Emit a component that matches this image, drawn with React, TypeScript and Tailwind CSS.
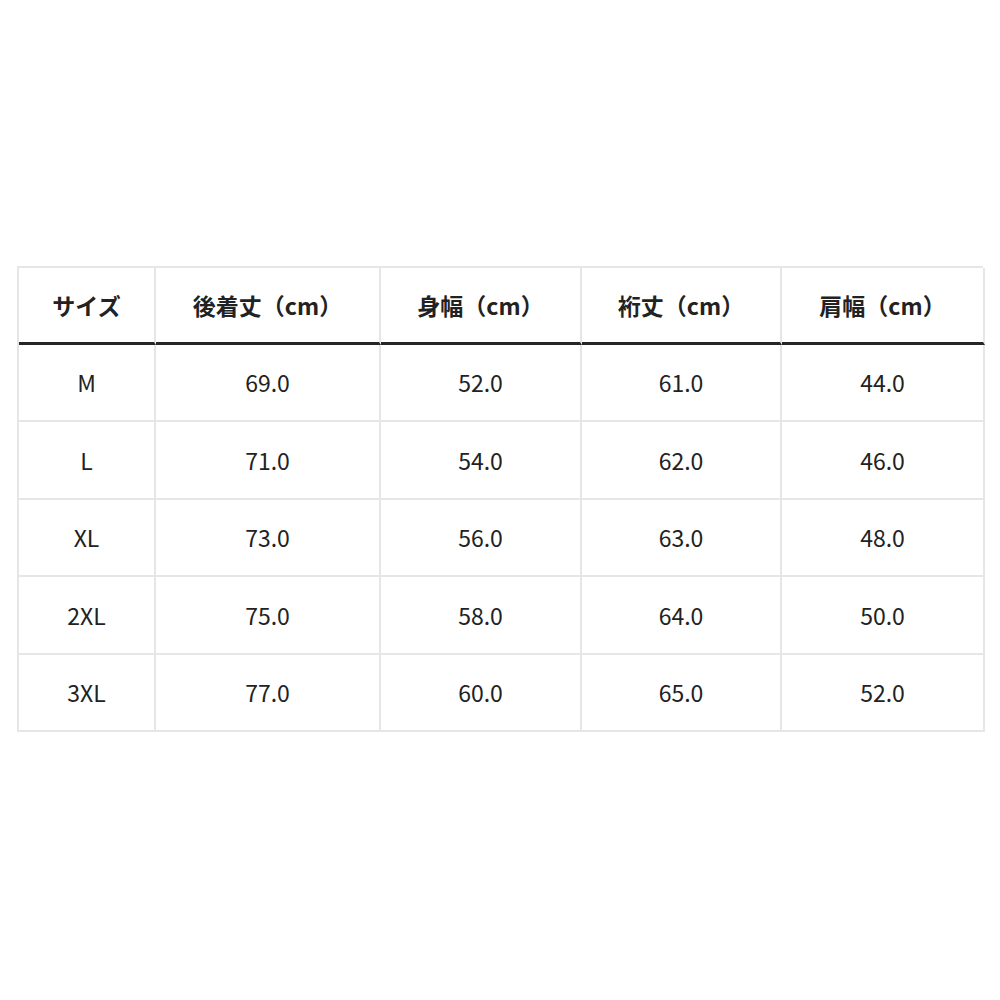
import React from "react";

const headers = ["サイズ", "後着丈（cm）", "身幅（cm）", "裄丈（cm）", "肩幅（cm）"];
const rows = [
  ["M", "69.0", "52.0", "61.0", "44.0"],
  ["L", "71.0", "54.0", "62.0", "46.0"],
  ["XL", "73.0", "56.0", "63.0", "48.0"],
  ["2XL", "75.0", "58.0", "64.0", "50.0"],
  ["3XL", "77.0", "60.0", "65.0", "52.0"],
];

export default function App() {
  return (
    <div
      className="w-[1000px] h-[1000px] bg-white pt-[266px] pl-[17px]"
      style={{ fontFamily: '"Noto Sans CJK JP", "Noto Sans", sans-serif' }}
    >
      <div className="grid w-[966px] grid-cols-[137px_225px_201px_200px_203px] border-l-2 border-t-2 border-[#e6e6e6]">
        {headers.map((h) => (
          <div
            key={h}
            className="flex h-[77px] items-center justify-center border-r-2 border-r-[#e6e6e6] border-b-[3px] border-b-[#262626] text-[23px] font-bold text-[#222]"
          >
            {h}
          </div>
        ))}
        {rows.map((r, ri) =>
          r.map((c, ci) => (
            <div
              key={ri + "-" + ci}
              className="flex h-[77.4px] items-center justify-center border-r-2 border-b-2 border-[#e6e6e6] text-[23px] text-[#222]"
            >
              {c}
            </div>
          ))
        )}
      </div>
    </div>
  );
}
